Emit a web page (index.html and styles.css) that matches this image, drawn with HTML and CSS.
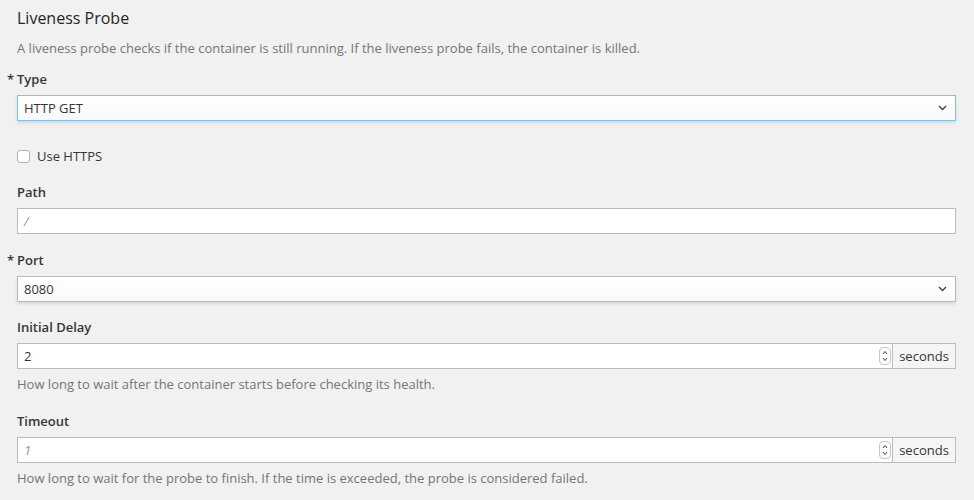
FILE: index.html
```html
<!DOCTYPE html>
<html>
<head>
<meta charset="utf-8">
<link rel="stylesheet" href="styles.css">
</head>
<body>
<div class="page">
  <h3 class="title">Liveness Probe</h3>
  <p class="desc">A liveness probe checks if the container is still running. If the liveness probe fails, the container is killed.</p>

  <div class="group first">
    <label class="lbl required">Type</label>
    <div class="select focus"><span>HTTP GET</span>
      <svg class="chev" width="9" height="6" viewBox="0 0 9 6"><path d="M1 1 L4.5 4.5 L8 1" fill="none" stroke="#3a3f4a" stroke-width="1.4"/></svg>
    </div>
  </div>

  <div class="check">
    <span class="box"></span><span>Use HTTPS</span>
  </div>

  <div class="group">
    <label class="lbl">Path</label>
    <div class="input"><span class="ph">/</span></div>
  </div>

  <div class="group g2">
    <label class="lbl required">Port</label>
    <div class="select"><span>8080</span>
      <svg class="chev" width="9" height="6" viewBox="0 0 9 6"><path d="M1 1 L4.5 4.5 L8 1" fill="none" stroke="#3a3f4a" stroke-width="1.4"/></svg>
    </div>
  </div>

  <div class="group g3">
    <label class="lbl">Initial Delay</label>
    <div class="igroup">
      <div class="input num"><span>2</span>
        <span class="spin"><svg width="10" height="16" viewBox="0 0 10 16"><path d="M3 6 L5 3.5 L7 6 M3 10 L5 12.5 L7 10" fill="none" stroke="#444" stroke-width="1"/></svg></span>
      </div>
      <span class="addon">seconds</span>
    </div>
    <p class="help">How long to wait after the container starts before checking its health.</p>
  </div>

  <div class="group g4">
    <label class="lbl">Timeout</label>
    <div class="igroup">
      <div class="input num"><span class="ph">1</span>
        <span class="spin"><svg width="10" height="16" viewBox="0 0 10 16"><path d="M3 6 L5 3.5 L7 6 M3 10 L5 12.5 L7 10" fill="none" stroke="#444" stroke-width="1"/></svg></span>
      </div>
      <span class="addon">seconds</span>
    </div>
    <p class="help">How long to wait for the probe to finish. If the time is exceeded, the probe is considered failed.</p>
  </div>
</div>
</body>
</html>
```
FILE: styles.css
```css
html, body {
  margin: 0;
  padding: 0;
  background: #f1f1f1;
}
body {
  font-family: "Open Sans", "Liberation Sans", sans-serif;
  font-size: 13px;
  color: #363636;
}
.page {
  padding: 7px 18px 0 17px;
}
.title {
  margin: 0;
  font-size: 16px;
  font-weight: 400;
  line-height: 22px;
  color: #262626;
}
.desc {
  margin: 9px 0 0;
  line-height: 20px;
  color: #72767b;
}
.group {
  margin-top: 12px;
}
.group.first {
  margin-top: 11px;
}
.lbl {
  display: block;
  font-weight: 600;
  line-height: 20px;
  margin-bottom: 6px;
  color: #363636;
}
.required::before {
  content: "*";
  display: inline-block;
  width: 10px;
  margin-left: -10px;
}
.select {
  height: 26px;
  box-sizing: border-box;
  border: 1px solid #bbb;
  background: linear-gradient(#fff, #f9f9f9);
  box-shadow: 0 2px 3px rgba(3, 3, 3, 0.1);
  display: flex;
  align-items: center;
  justify-content: space-between;
  padding: 0 8px 0 6px;
}
.select.focus {
  border-color: #7dc3e8;
}
.chev {
  display: block;
}
.check {
  margin-top: 25px;
  display: flex;
  align-items: center;
  height: 20px;
  gap: 7px;
}
.box {
  width: 11px;
  height: 11px;
  border: 1px solid #b4b4b4;
  border-radius: 3px;
  background: #fff;
}
.check + .group {
  margin-top: 16px;
}
.input {
  height: 26px;
  box-sizing: border-box;
  border: 1px solid #bbb;
  background: #fff;
  display: flex;
  align-items: center;
  padding: 0 6px;
}
.ph {
  color: #999;
  font-style: italic;
}
.g2 { margin-top: 16px; }
.g3 { margin-top: 15px; }
.g4 { margin-top: 17px; }
.igroup {
  display: flex;
}
.num {
  flex: 1;
  justify-content: space-between;
  padding-right: 1px;
}
.spin {
  width: 10px;
  height: 16px;
  border: 1px solid #c8c8c8;
  border-radius: 4px;
  background: #fafafa;
  display: flex;
}
.addon {
  width: 63px;
  height: 26px;
  box-sizing: border-box;
  border: 1px solid #bbb;
  border-left: none;
  background: #f5f5f5;
  display: flex;
  align-items: center;
  justify-content: center;
  color: #363636;
}
.help {
  margin: 5px 0 0;
  line-height: 20px;
  color: #72767b;
}
```
